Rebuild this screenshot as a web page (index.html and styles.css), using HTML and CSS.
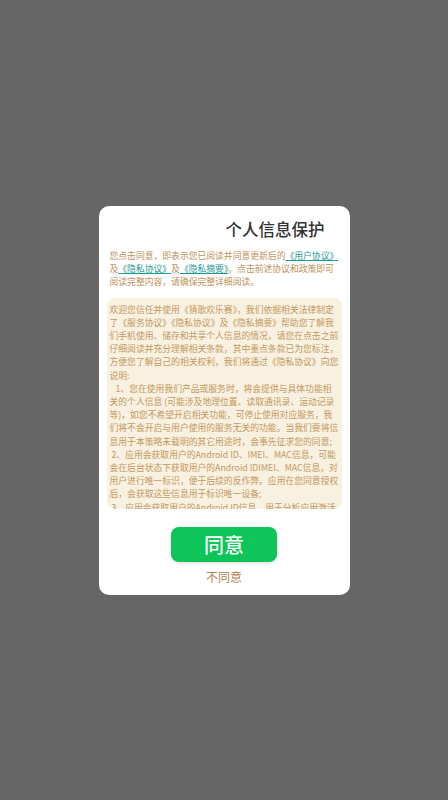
FILE: index.html
```html
<!DOCTYPE html>
<html lang="zh-CN">
<head>
<meta charset="utf-8">
<link rel="stylesheet" href="styles.css">
</head>
<body>
<div class="screen">
  <div class="card">
    <div class="title">个人信息保护</div>
    <p class="intro">您点击同意，即表示您已阅读并同意更新后的<a class="link">《用户协议》</a>及<a class="link">《隐私协议》</a>及<a class="link">《隐私摘要》</a>。点击前述协议和政策即可阅读完整内容，请确保完整详细阅读。</p>
    <div class="box">
      <p>欢迎您信任并使用《猜歌欢乐赛》，我们依据相关法律制定了《服务协议》《隐私协议》及《隐私摘要》帮助您了解我们手机使用、储存和共享个人信息的情况，请您在点击之前仔细阅读并充分理解相关条款，其中重点条款已为您标注，方便您了解自己的相关权利，我们将通过《隐私协议》向您说明:</p>
      <p class="item-first">&nbsp;1、您在使用我们产品或服务时，将会提供与具体功能相关的个人信息 (可能涉及地理位置、读取通讯录、运动记录等)，如您不希望开启相关功能，可停止使用对应服务，我们将不会开启与用户使用的服务无关的功能。当我们要将信息用于本策略未载明的其它用途时，会事先征求您的同意;</p>
      <p>&nbsp;2、应用会获取用户的Android ID、IMEI、MAC信息，可能会在后台状态下获取用户的Android IDIMEI、MAC信息，对用户进行唯一标识，便于后续的反作弊。应用在您同意授权后，会获取这些信息用于标识唯一设备;</p>
      <p>&nbsp;3、应用会获取用户的Android ID信息，用于分析应用激活数据。</p>
    </div>
    <button class="agree">同意</button>
    <div class="disagree">不同意</div>
  </div>
</div>
</body>
</html>
```
FILE: styles.css
```css
html, body {
  margin: 0;
  padding: 0;
}
body {
  background: #666666;
  font-family: "Noto Sans CJK SC", "Noto Sans", sans-serif;
}
.screen {
  width: 448px;
  height: 800px;
  display: flex;
  align-items: center;
  justify-content: center;
}
.card {
  width: 251px;
  box-sizing: border-box;
  background: #ffffff;
  border-radius: 10px;
  padding: 12px 8px 10px 8px;
  display: flex;
  flex-direction: column;
}
.title {
  font-size: 16.5px;
  line-height: 22px;
  font-weight: 500;
  color: #333333;
  padding-left: 119px;
  white-space: nowrap;
}
.intro {
  margin: 9.5px 0 0 0;
  padding: 0 1px 0 3px;
  font-size: 8.8px;
  line-height: 13px;
  color: #c0925a;
}
.link {
  color: #1f9b96;
  text-decoration: underline;
}
.box {
  margin-top: 9.5px;
  height: 211px;
  box-sizing: border-box;
  overflow: hidden;
  background: #f8f0e0;
  border-radius: 8px;
  padding: 5px 3px 0 3px;
  font-size: 8.8px;
  line-height: 13.2px;
  color: #c4985f;
}
.box p {
  margin: 0;
}
.box .item-first {
  text-indent: 4px;
}
.agree {
  align-self: center;
  margin-top: 18px;
  width: 106px;
  height: 35px;
  border: none;
  border-radius: 8px;
  background: #0cc457;
  color: #ffffff;
  font-family: "Noto Sans CJK SC", "Noto Sans", sans-serif;
  font-size: 20px;
  font-weight: 500;
  line-height: 35px;
  padding: 0;
  box-shadow: 0 1px 2px rgba(0, 0, 0, 0.15);
}
.disagree {
  margin-top: 7px;
  text-align: center;
  font-size: 12px;
  line-height: 16px;
  color: #b3814e;
}
```
